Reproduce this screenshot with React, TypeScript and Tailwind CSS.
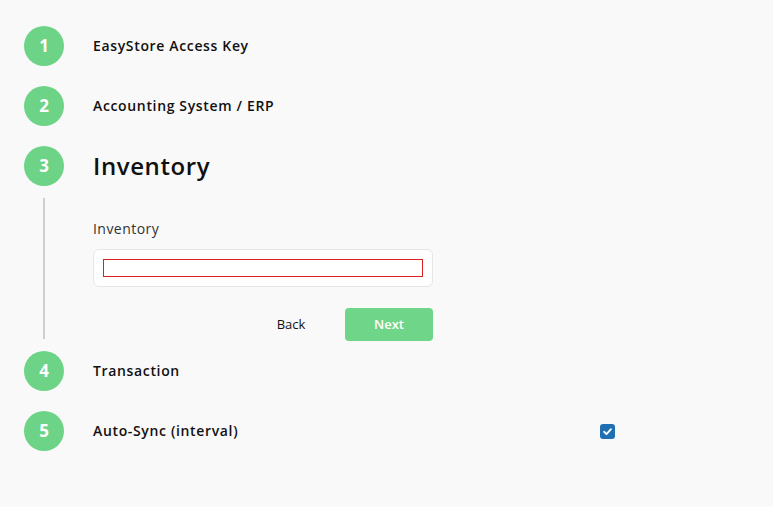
import React from "react";

const font = { fontFamily: '"Open Sans", "Liberation Sans", sans-serif' };

function Circle({ n }: { n: number }) {
  return (
    <div className="w-10 h-10 shrink-0 rounded-full bg-[#6dd487] flex items-center justify-center text-white font-bold text-[17px]">
      {n}
    </div>
  );
}

function Step({ n, title, children }: { n: number; title: string; children?: React.ReactNode }) {
  return (
    <div className="flex items-center h-10">
      <Circle n={n} />
      <div className="ml-[29px] -mt-px text-[14px] font-semibold tracking-[0.65px] text-[#111]">{title}</div>
      {children}
    </div>
  );
}

export default function App() {
  return (
    <div className="min-h-screen bg-[#f9f9f9] pt-[26px] pl-6" style={font}>
      <div className="w-[591px] flex flex-col">
        <Step n={1} title="EasyStore Access Key" />
        <div className="h-5" />
        <Step n={2} title="Accounting System / ERP" />
        <div className="h-5" />
        <div className="flex items-center h-10">
          <Circle n={3} />
          <div className="ml-[29px] text-[24px] font-semibold tracking-[0.6px] text-[#111]">Inventory</div>
        </div>
        <div className="mt-3 mb-3 ml-[19px] h-[141px] border-l-2 border-[#cfcfcf] pl-12 pt-[21px]">
          <div className="text-[14px] leading-5 tracking-[0.45px] text-[#333]">Inventory</div>
          <div className="mt-[10px] w-[340px] h-[38px] bg-white border border-[#e6e6e6] rounded-md p-[9px]">
            <input className="block w-full h-[18px] border border-[#e02020] bg-white outline-none" />
          </div>
          <div className="mt-[21px] w-[340px] flex justify-end gap-4">
            <button className="w-[76px] h-[33px] text-[13px] text-[#111]">Back</button>
            <button className="w-[88px] h-[33px] rounded bg-[#6fd589] text-white text-[13px] font-semibold">
              Next
            </button>
          </div>
        </div>
        <Step n={4} title="Transaction" />
        <div className="h-5" />
        <Step n={5} title="Auto-Sync (interval)">
          <div className="ml-auto w-[15px] h-[15px] rounded-[3px] bg-[#1f6fb2] flex items-center justify-center">
            <svg width="11" height="11" viewBox="0 0 12 12" fill="none">
              <path d="M2.3 6.3 L4.9 8.8 L9.8 3.4" stroke="white" strokeWidth="2" strokeLinecap="round" strokeLinejoin="round" />
            </svg>
          </div>
        </Step>
      </div>
    </div>
  );
}
